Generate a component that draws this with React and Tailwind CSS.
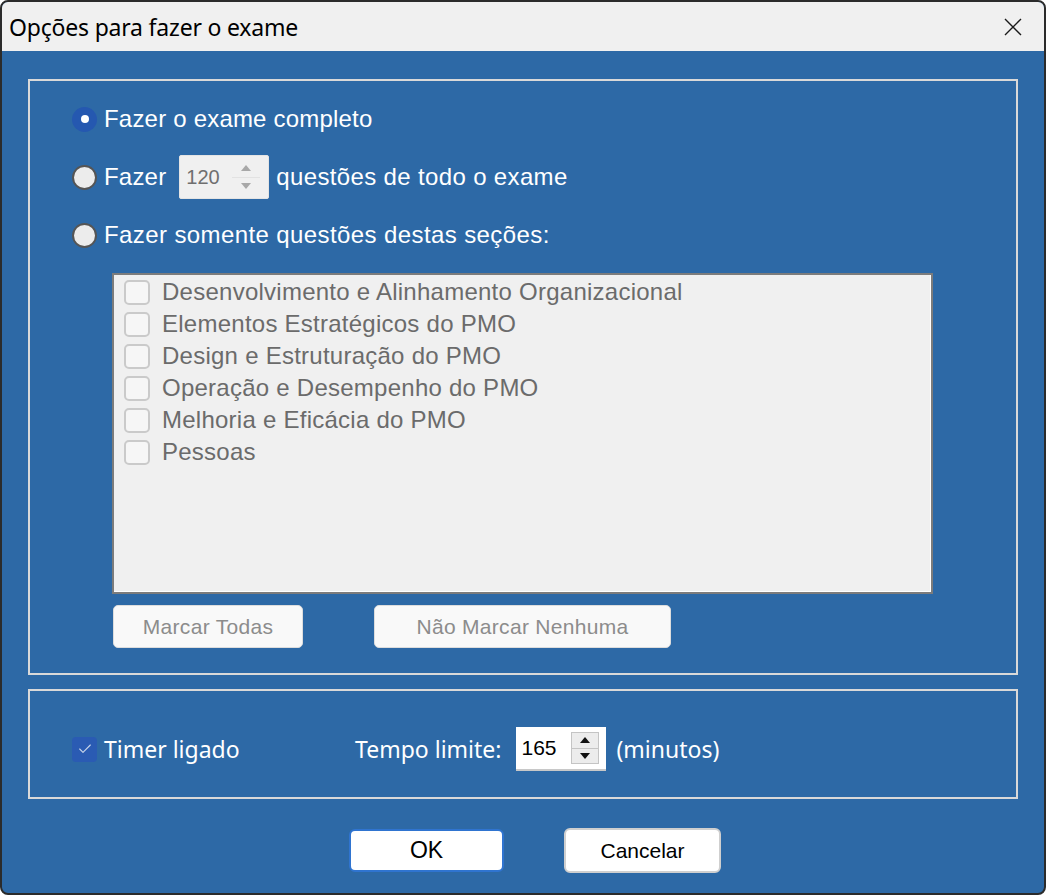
import { Check } from 'lucide-react';

const sections = [
    'Desenvolvimento e Alinhamento Organizacional',
    'Elementos Estratégicos do PMO',
    'Design e Estruturação do PMO',
    'Operação e Desempenho do PMO',
    'Melhoria e Eficácia do PMO',
    'Pessoas',
];

function Radio({ checked }) {
    if (checked) {
        return (
            <div className="w-[25px] h-[25px] rounded-full bg-[#2558b0] flex items-center justify-center shrink-0">
                <div className="w-[8px] h-[8px] rounded-full bg-white" />
            </div>
        );
    }
    return <div className="w-[25px] h-[25px] rounded-full bg-[#ececec] border-2 border-[#555555] shrink-0" />;
}

function Arrows({ disabled }) {
    const color = disabled ? '#a8a8a8' : '#111111';
    return (
        <div className={`flex flex-col h-full w-[28px] ${disabled ? '' : 'border border-[#c4c4c4]'}`}>
            <div className={`flex-1 flex items-center justify-center ${disabled ? 'border-b border-[#e2e2e2]' : 'bg-[#ececec] border-b border-[#c4c4c4]'}`}>
                <svg width="10" height="6" viewBox="0 0 10 6"><path d="M0 6 L5 0 L10 6 Z" fill={color} /></svg>
            </div>
            <div className={`flex-1 flex items-center justify-center ${disabled ? '' : 'bg-[#ececec]'}`}>
                <svg width="10" height="6" viewBox="0 0 10 6"><path d="M0 0 L5 6 L10 0 Z" fill={color} /></svg>
            </div>
        </div>
    );
}

export default function App() {
    return (
        <div className="w-[1046px] h-[895px] rounded-[8px] border-2 border-[#2b2b2b] overflow-hidden flex flex-col bg-[#2d69a6] font-['Liberation_Sans',Arial,sans-serif]">
            {/* Title bar */}
            <div className="h-[49px] bg-[#f0f0f0] flex items-center justify-between pl-[7px] pr-[22px] shrink-0">
                <span className="font-['Noto_Sans',sans-serif] text-[23px] text-black tracking-[-0.2px] pt-[1px]">Opções para fazer o exame</span>
                <svg width="18" height="18" viewBox="0 0 18 18">
                    <path d="M1 1 L17 17 M17 1 L1 17" stroke="#1a1a1a" strokeWidth="1.4" />
                </svg>
            </div>

            <div className="flex-1 px-[26px] pt-[28px]">
                {/* Exam options panel */}
                <div className="h-[596px] border-2 border-[#d9d9d9] pt-[9px]">
                    <div className="h-[58px] flex items-center pl-[42px] gap-[7px]">
                        <Radio checked />
                        <span className="text-[24px] text-white tracking-[0.2px]">Fazer o exame completo</span>
                    </div>
                    <div className="h-[58px] flex items-center pl-[42px] gap-[7px]">
                        <Radio />
                        <span className="text-[24px] text-white tracking-[0.2px]">Fazer</span>
                        <div className="ml-[6px] w-[90px] h-[44px] bg-[#f0f0f0] border border-[#e4e4e4] rounded-[2px] flex items-center justify-between pl-[6px] pr-[8px] py-[3px]">
                            <span className="text-[20px] text-[#6f6f6f]">120</span>
                            <Arrows disabled />
                        </div>
                        <span className="text-[24px] text-white tracking-[0.35px]">questões de todo o exame</span>
                    </div>
                    <div className="h-[58px] flex items-center pl-[42px] gap-[7px]">
                        <Radio />
                        <span className="text-[24px] text-white tracking-[0.4px]">Fazer somente questões destas seções:</span>
                    </div>

                    {/* Sections list */}
                    <div className="mt-[9px] ml-[82px] w-[821px] h-[321px] border-2 border-[#7c7c7c] bg-[#f0f0f0] shadow-[inset_-1px_-1px_0_#ffffff] pt-[1px] pl-[10px]">
                        {sections.map((s) => (
                            <div key={s} className="h-[32px] flex items-center gap-[12px]">
                                <div className="w-[26px] h-[25px] rounded-[5px] border-2 border-[#cacaca] bg-[#f6f6f6] shrink-0" />
                                <span className="text-[24px] text-[#6b6b6b] tracking-[0.25px]">{s}</span>
                            </div>
                        ))}
                    </div>

                    <div className="mt-[11px] ml-[83px] flex gap-[71px]">
                        <button className="w-[190px] h-[43px] bg-[#f9f9f9] border border-[#dddddd] rounded-[5px] text-[21px] tracking-[0.3px] text-[#8c8c8c]">Marcar Todas</button>
                        <button className="w-[297px] h-[43px] bg-[#f9f9f9] border border-[#dddddd] rounded-[5px] text-[21px] tracking-[0.3px] text-[#8c8c8c]">Não Marcar Nenhuma</button>
                    </div>
                </div>

                {/* Timer panel */}
                <div className="mt-[14px] h-[110px] border-2 border-[#d9d9d9] flex items-center pl-[42px] pt-[10px]">
                    <div className="w-[25px] h-[25px] rounded-[4px] bg-[#2a5bb3] flex items-center justify-center shrink-0">
                        <Check size={16} strokeWidth={1.6} color="#c9d6ea" />
                    </div>
                    <span className="ml-[7px] w-[251px] font-['Noto_Sans',sans-serif] text-[23px] text-white">Timer ligado</span>
                    <span className="font-['Noto_Sans',sans-serif] text-[23px] text-white">Tempo limite:</span>
                    <div className="ml-[15px] w-[90px] h-[44px] bg-white border-b-2 border-[#c8c8c8] flex items-center justify-between pl-[5px] pr-[7px] py-[5px]">
                        <span className="text-[21px] text-black">165</span>
                        <Arrows />
                    </div>
                    <span className="ml-[10px] font-['Noto_Sans',sans-serif] text-[23px] text-white">(minutos)</span>
                </div>

                {/* Dialog buttons */}
                <div className="mt-[29px] pl-[321px] flex items-center gap-[60px]">
                    <button className="w-[155px] h-[43px] bg-white border-2 border-[#2f74d0] rounded-[6px] text-[23px] text-black">OK</button>
                    <button className="w-[157px] h-[45px] bg-white border-2 border-[#cfcfcf] rounded-[6px] text-[21px] text-black">Cancelar</button>
                </div>
            </div>
        </div>
    );
}
